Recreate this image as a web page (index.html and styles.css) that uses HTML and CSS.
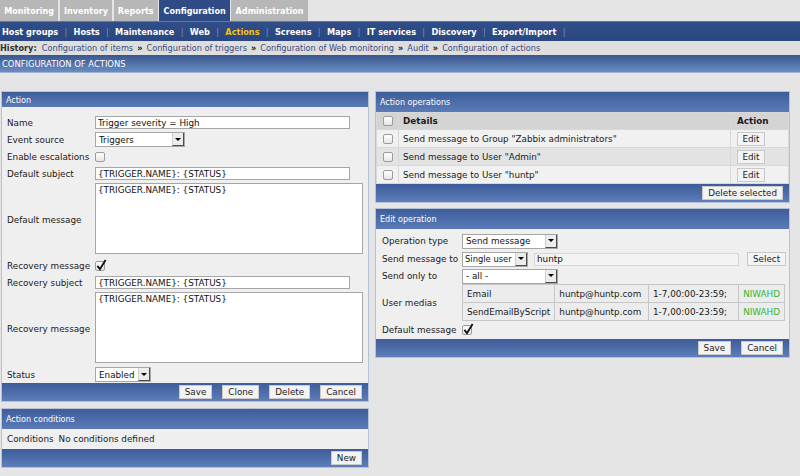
FILE: index.html
```html
<!DOCTYPE html>
<html lang="en">
<head>
    <meta charset="UTF-8">
    <title>Configuration of actions</title>
    <link rel="stylesheet" href="styles.css">
</head>
<body>
    <div class="main-tabs">
        <span class="tab">Monitoring</span>
        <span class="tab">Inventory</span>
        <span class="tab">Reports</span>
        <span class="tab active">Configuration</span>
        <span class="tab">Administration</span>
    </div>

    <div class="sub-menu">
        <a>Host groups</a><span class="sep">|</span>
        <a>Hosts</a><span class="sep">|</span>
        <a>Maintenance</a><span class="sep">|</span>
        <a>Web</a><span class="sep">|</span>
        <a class="current">Actions</a><span class="sep">|</span>
        <a>Screens</a><span class="sep">|</span>
        <a>Maps</a><span class="sep">|</span>
        <a>IT services</a><span class="sep">|</span>
        <a>Discovery</a><span class="sep">|</span>
        <a>Export/Import</a><span class="sep">|</span>
    </div>

    <div class="history">
        <b>History:</b>
        <a>Configuration of items</a><span class="arrow">&raquo;</span>
        <a>Configuration of triggers</a><span class="arrow">&raquo;</span>
        <a>Configuration of Web monitoring</a><span class="arrow">&raquo;</span>
        <a>Audit</a><span class="arrow">&raquo;</span>
        <a>Configuration of actions</a>
    </div>

    <div class="page-title">CONFIGURATION OF ACTIONS</div>

    <div class="content">
        <div class="col-left">
            <div class="panel">
                <div class="panel-head head-short">Action</div>
                <table class="form action-form">
                    <tr>
                        <td class="lbl">Name</td>
                        <td><input class="text w-long" value="Trigger severity = High" readonly></td>
                    </tr>
                    <tr>
                        <td class="lbl">Event source</td>
                        <td><span class="select w-event">Triggers<span class="drop"></span></span></td>
                    </tr>
                    <tr>
                        <td class="lbl">Enable escalations</td>
                        <td><span class="cb"></span></td>
                    </tr>
                    <tr>
                        <td class="lbl">Default subject</td>
                        <td><input class="text w-long" value="{TRIGGER.NAME}: {STATUS}" readonly></td>
                    </tr>
                    <tr>
                        <td class="lbl">Default message</td>
                        <td><textarea class="area" readonly>{TRIGGER.NAME}: {STATUS}</textarea></td>
                    </tr>
                    <tr>
                        <td class="lbl">Recovery message</td>
                        <td><span class="cb on"><svg width="11" height="12" viewBox="0 0 12 13"><path d="M1.5 7.5 L4.3 11 L10.5 1" fill="none" stroke="#111" stroke-width="2"/></svg></span></td>
                    </tr>
                    <tr>
                        <td class="lbl">Recovery subject</td>
                        <td><input class="text w-long" value="{TRIGGER.NAME}: {STATUS}" readonly></td>
                    </tr>
                    <tr>
                        <td class="lbl">Recovery message</td>
                        <td><textarea class="area" readonly>{TRIGGER.NAME}: {STATUS}</textarea></td>
                    </tr>
                    <tr>
                        <td class="lbl">Status</td>
                        <td><span class="select w-status">Enabled<span class="drop"></span></span></td>
                    </tr>
                </table>
                <div class="panel-foot">
                    <button class="btn">Save</button>
                    <button class="btn">Clone</button>
                    <button class="btn">Delete</button>
                    <button class="btn">Cancel</button>
                </div>
            </div>

            <div class="panel">
                <div class="panel-head">Action conditions</div>
                <div class="cond-row">
                    <span>Conditions</span>
                    <span>No conditions defined</span>
                </div>
                <div class="panel-foot">
                    <button class="btn">New</button>
                </div>
            </div>
        </div>

        <div class="col-right">
            <div class="panel">
                <div class="panel-head">Action operations</div>
                <table class="grid ops">
                    <tr class="grid-head">
                        <td class="c-check"><span class="cb"></span></td>
                        <td>Details</td>
                        <td class="c-action">Action</td>
                    </tr>
                    <tr>
                        <td class="c-check"><span class="cb"></span></td>
                        <td>Send message to Group "Zabbix administrators"</td>
                        <td class="c-action"><button class="btn btn-small">Edit</button></td>
                    </tr>
                    <tr class="even">
                        <td class="c-check"><span class="cb"></span></td>
                        <td>Send message to User "Admin"</td>
                        <td class="c-action"><button class="btn btn-small">Edit</button></td>
                    </tr>
                    <tr>
                        <td class="c-check"><span class="cb"></span></td>
                        <td>Send message to User "huntp"</td>
                        <td class="c-action"><button class="btn btn-small">Edit</button></td>
                    </tr>
                </table>
                <div class="panel-foot">
                    <button class="btn">Delete selected</button>
                </div>
            </div>

            <div class="panel">
                <div class="panel-head">Edit operation</div>
                <table class="form op-form">
                    <tr>
                        <td class="lbl">Operation type</td>
                        <td><span class="select w-optype">Send message<span class="drop"></span></span></td>
                    </tr>
                    <tr>
                        <td class="lbl">Send message to</td>
                        <td>
                            <div class="send-to">
                                <span class="select w-single">Single user<span class="drop"></span></span>
                                <input class="text w-user" value="huntp" readonly>
                                <button class="btn">Select</button>
                            </div>
                        </td>
                    </tr>
                    <tr class="short">
                        <td class="lbl">Send only to</td>
                        <td><span class="select w-optype">- all -<span class="drop"></span></span></td>
                    </tr>
                    <tr>
                        <td class="lbl">User medias</td>
                        <td>
                            <table class="medias">
                                <tr>
                                    <td class="m-type">Email</td>
                                    <td class="m-to">huntp@huntp.com</td>
                                    <td class="m-when">1-7,00:00-23:59;</td>
                                    <td class="m-sev">NIWAHD</td>
                                </tr>
                                <tr>
                                    <td class="m-type">SendEmailByScript</td>
                                    <td class="m-to">huntp@huntp.com</td>
                                    <td class="m-when">1-7,00:00-23:59;</td>
                                    <td class="m-sev">NIWAHD</td>
                                </tr>
                            </table>
                        </td>
                    </tr>
                    <tr>
                        <td class="lbl">Default message</td>
                        <td><span class="cb on"><svg width="11" height="12" viewBox="0 0 12 13"><path d="M1.5 7.5 L4.3 11 L10.5 1" fill="none" stroke="#111" stroke-width="2"/></svg></span></td>
                    </tr>
                </table>
                <div class="panel-foot">
                    <button class="btn">Save</button>
                    <button class="btn">Cancel</button>
                </div>
            </div>
        </div>
    </div>
</body>
</html>
```

FILE: styles.css
```css
* {
    box-sizing: border-box;
}

body {
    margin: 0;
    width: 800px;
    height: 476px;
    overflow: hidden;
    background: #e5e5e5;
    font-family: "DejaVu Sans", Verdana, sans-serif;
    font-size: 8.8px;
    color: #1a1a1a;
}

/* top navigation */

.main-tabs {
    display: flex;
    gap: 1.5px;
    height: 21px;
}

.main-tabs .tab {
    display: flex;
    align-items: center;
    padding: 0 4.2px;
    background: #b7b7b7;
    color: #fff;
    font-size: 8.1px;
    font-weight: bold;
}

.main-tabs .tab.active {
    background: #2e4b85;
}

.sub-menu {
    display: flex;
    align-items: center;
    height: 20px;
    padding-left: 2px;
    background: linear-gradient(#2f4d88, #2b4781);
    border-top: 1px solid #5b77ad;
    color: #fff;
    font-size: 8.2px;
    font-weight: bold;
    white-space: nowrap;
}

.sub-menu .current {
    color: #f4c20d;
}

.sub-menu .sep {
    margin: 0 6.3px;
    color: #7d93bf;
    font-weight: normal;
}

.history {
    display: flex;
    align-items: center;
    height: 14px;
    background: #dedede;
    color: #3d4c7a;
    font-size: 8.2px;
    white-space: nowrap;
}

.history b {
    margin-right: 5px;
    color: #333;
}

.history .arrow {
    margin: 0 4px;
    color: #222;
    font-weight: bold;
}

.page-title {
    display: flex;
    align-items: center;
    height: 18px;
    padding-left: 2px;
    background: linear-gradient(#39578f, #6b8bc3);
    border-bottom: 1px solid #9fb3d6;
    color: #fff;
    font-size: 8.4px;
}

/* columns */

.content {
    display: flex;
    gap: 6px;
    padding: 18px 0 0 1px;
}

.col-left {
    display: flex;
    flex-direction: column;
    gap: 6px;
    width: 368px;
}

.col-right {
    display: flex;
    flex-direction: column;
    gap: 5px;
    width: 415px;
}

.panel {
    background: #efefef;
    border: 1px solid #b3c1d9;
}

.panel-head {
    display: flex;
    align-items: center;
    height: 20px;
    padding-left: 4px;
    background: linear-gradient(#3e5e9b, #5a7bb8);
    color: #fff;
    font-size: 8px;
}

.panel-head.head-short {
    height: 15px;
    align-items: flex-end;
    padding-bottom: 2px;
    margin-bottom: 7px;
}

.panel-foot {
    display: flex;
    justify-content: flex-end;
    align-items: center;
    gap: 10px;
    height: 18px;
    padding-right: 6px;
    background: linear-gradient(#3d5c99, #5d7eba);
}

/* controls */

.btn {
    height: 14px;
    padding: 0 5px;
    margin: 0;
    border: 1px solid #c9c9c9;
    border-radius: 0;
    background: #f3f3f3;
    color: #222;
    font: inherit;
    line-height: 12px;
    white-space: nowrap;
}

.btn-small {
    width: 28px;
    padding: 0;
}

.text {
    height: 13px;
    margin: 0;
    padding: 0 2px;
    border: 1px solid #a6a6a6;
    background: #fff;
    color: #111;
    font: inherit;
    vertical-align: middle;
}

.w-long {
    width: 255px;
}

.area {
    display: block;
    width: 268px;
    height: 71px;
    margin: 1px 0 3px;
    padding: 1px 2px;
    border: 1px solid #a6a6a6;
    background: #fff;
    color: #111;
    font: inherit;
    resize: none;
}

.select {
    display: inline-flex;
    align-items: center;
    height: 15px;
    padding-left: 3px;
    border: 1px solid #a6a6a6;
    background: #fff;
    color: #111;
    white-space: nowrap;
    overflow: hidden;
    vertical-align: middle;
}

.select .drop {
    display: flex;
    flex: none;
    align-items: center;
    justify-content: center;
    width: 12px;
    height: 13px;
    margin-left: auto;
    background: #ececec;
    border-left: 1px solid #d0d0d0;
    border-right: 1px solid #4d4d4d;
    border-bottom: 1px solid #4d4d4d;
}

.select .drop::after {
    content: "";
    border-left: 3px solid transparent;
    border-right: 3px solid transparent;
    border-top: 3px solid #000;
}

.w-event {
    width: 90px;
}

.w-status {
    width: 56px;
}

.w-optype {
    width: 96px;
}

.w-single {
    width: 66px;
    padding-left: 2px;
    font-size: 8.4px;
}

.cb {
    display: inline-block;
    position: relative;
    width: 10px;
    height: 10px;
    border: 1px solid #9c9c9c;
    border-radius: 2px;
    background: linear-gradient(#fff, #e6e6e6);
    vertical-align: middle;
}

.cb svg {
    position: absolute;
    left: 0;
    top: -3px;
}

/* forms */

.form {
    width: 100%;
    border-collapse: collapse;
}

.form td {
    height: 17px;
    padding: 0;
    vertical-align: middle;
}

.action-form .lbl {
    width: 93px;
    padding-left: 5px;
}

.op-form {
    margin-top: 3px;
}

.op-form td {
    height: 18px;
}

.op-form tr.short td {
    height: 16px;
}

.op-form .lbl {
    width: 86px;
    padding-left: 6px;
}

.send-to {
    display: flex;
    align-items: center;
}

.send-to .w-user {
    width: 205px;
    margin: 0 8px 0 6px;
    background: #f3f3f3;
    border-color: #d6d6d6;
}

.medias {
    width: 323px;
    border-collapse: collapse;
}

.medias td {
    height: 18px;
    padding: 0 4px;
    border: 1px solid #c6c6c6;
    background: #ececec;
    white-space: nowrap;
}

.medias .m-type {
    width: 91px;
}

.medias .m-to {
    width: 94px;
}

.medias .m-when {
    width: 91px;
}

.medias .m-sev {
    color: #33b433;
}

.cond-row {
    display: flex;
    gap: 5px;
    align-items: center;
    height: 20px;
    padding-left: 5px;
}

/* operations grid */

.grid {
    width: 100%;
    border-collapse: collapse;
}

.grid td {
    height: 18px;
    padding: 0 4px;
    border: 1px solid #d8d8d8;
    background: #f1f1f1;
}

.grid tr.even td {
    background: #e3e3e3;
}

.grid-head td {
    height: 17px;
    background: #d4d4d4;
    font-weight: bold;
}

.grid .c-check {
    width: 22px;
    padding: 0 0 0 6px;
}

.grid .c-action {
    width: 58px;
    padding-left: 6px;
}
```
